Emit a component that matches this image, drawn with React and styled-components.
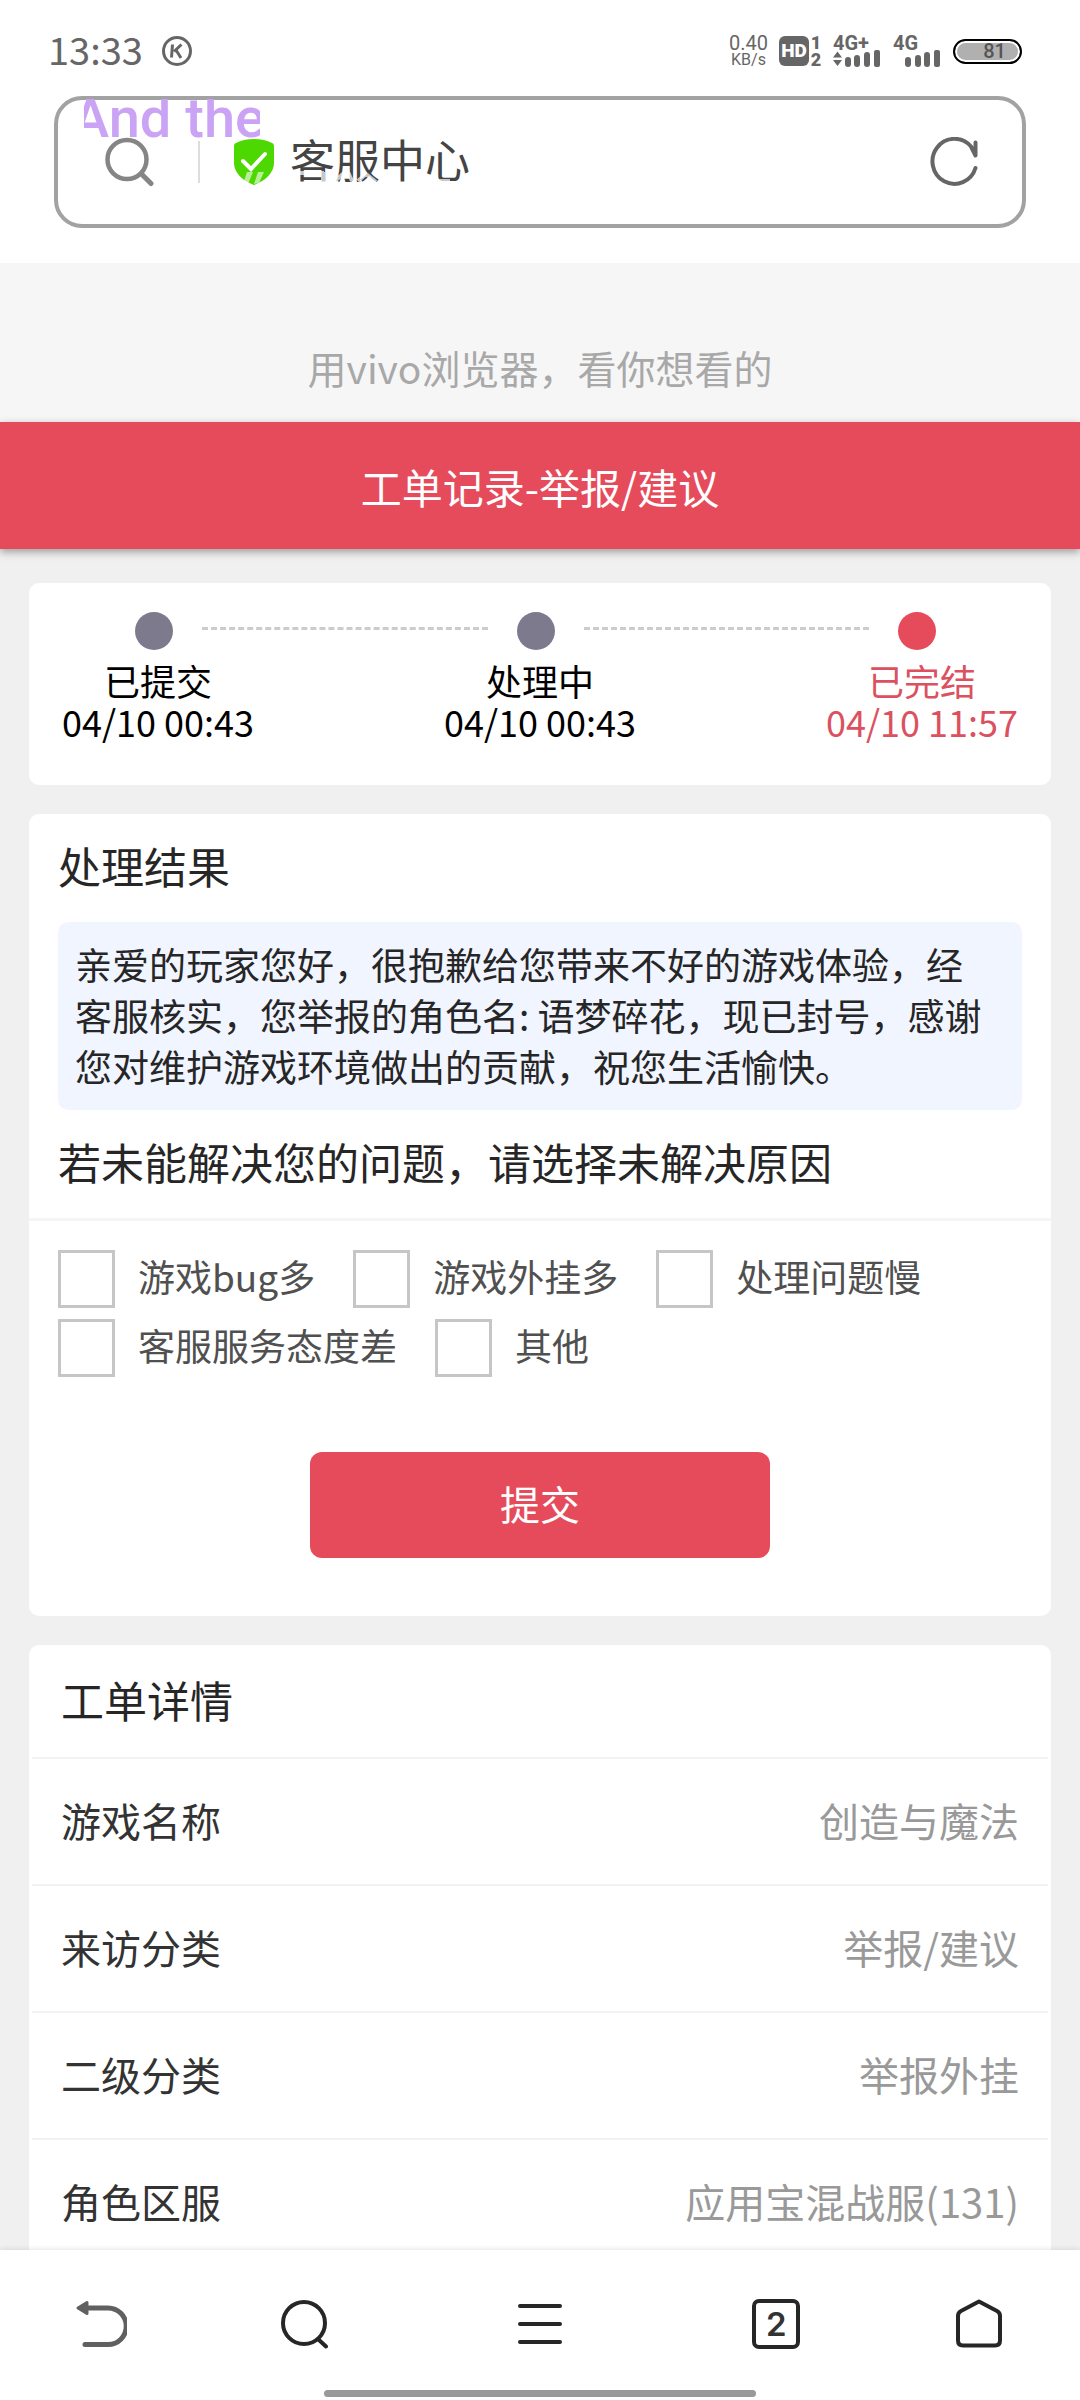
import React, { useState } from 'react';
import styled, { createGlobalStyle } from 'styled-components';

const steps = [
  { name: '已提交', time: '04/10 00:43' },
  { name: '处理中', time: '04/10 00:43' },
  { name: '已完结', time: '04/10 11:57', active: true },
];

const reasons = [
  '游戏bug多',
  '游戏外挂多',
  '处理问题慢',
  '客服服务态度差',
  '其他',
];

const details = [
  { label: '游戏名称', value: '创造与魔法' },
  { label: '来访分类', value: '举报/建议' },
  { label: '二级分类', value: '举报外挂' },
  { label: '角色区服', value: '应用宝混战服(131)' },
];

function StatusBar() {
  return (
    <StStatus>
      <StClock>13:33</StClock>
      <svg width="30" height="30" viewBox="0 0 30 30" fill="none" stroke="#666">
        <circle cx="15" cy="15" r="13.5" strokeWidth="3" />
        <path d="M10.5 8.5 9.5 21.5M19.5 8.5 12 15.5M14 14l5 8" strokeWidth="3" />
      </svg>
      <StSpeed>
        <StSpeedNum>0.40</StSpeedNum>
        <StSpeedUnit>KB/s</StSpeedUnit>
      </StSpeed>
      <StHd>HD</StHd>
      <StSims>
        <span>1</span>
        <span>2</span>
      </StSims>
      <StSignal>
        <StNet>4G+</StNet>
        <svg width="48" height="17" viewBox="0 0 48 17" fill="#666">
          <path d="M0 7.500l4.500-6 4.500 6zM0 10l4.500 6 4.500-6z" />
          <rect x="12" y="7" width="6" height="10" rx="3" />
          <rect x="21" y="5" width="6" height="12" rx="3" />
          <rect x="31" y="2" width="6" height="15" rx="3" />
          <rect x="41" y="0" width="6" height="17" rx="2" />
        </svg>
      </StSignal>
      <StSignal>
        <StNet>4G</StNet>
        <svg width="48" height="17" viewBox="0 0 48 17" fill="#666">
          <rect x="12" y="7" width="6" height="10" rx="3" />
          <rect x="22" y="5" width="6" height="12" rx="3" />
          <rect x="31" y="2" width="6" height="15" rx="3" />
          <rect x="41" y="0" width="6" height="17" rx="2" />
        </svg>
      </StSignal>
      <StBattery>81</StBattery>
    </StStatus>
  );
}

function AddressBar() {
  return (
    <StAddress>
      <StLyric>And the</StLyric>
      <StIconButton aria-label="搜索">
        <svg width="50" height="50" viewBox="0 0 50 50" fill="none" stroke="#858585">
          <circle cx="23" cy="22.500" r="19.500" strokeWidth="4.500" />
          <path d="M37.500 37 47 46.500" strokeWidth="5" strokeLinecap="round" />
        </svg>
      </StIconButton>
      <StDivider />
      <svg width="40" height="46" viewBox="0 0 40 46" fill="none">
        <path
          d="M20 0c7 0 13 1.500 18 4 1.500.7 2 1.800 2 3.500V24c0 10-9 18-20 22C9 42 0 34 0 24V7.500C0 5.800.5 4.700 2 4 7 1.500 13 0 20 0z"
          fill="#4cd800"
        />
        <path d="m9 22 8 8 14-15" stroke="#fff" strokeWidth="4" strokeLinecap="round" />
        <path d="M13 33h6l-5 12-4-3zM24 33h6l-5 11-5 1z" fill="#fff" opacity=".6" />
      </svg>
      <StSite>
        客服中心
        <StGhost viewBox="0 0 160 12" fill="none" stroke="#fff" strokeWidth="4">
          <path
            d="M8 1v11M8 2h26M33 1v11M46 9l8-7M58 1l4 9M68 10 76 3l10 8M108 1v10M142 10h18"
            opacity=".7"
          />
        </StGhost>
      </StSite>
      <StIconButton aria-label="刷新">
        <svg width="50" height="50" viewBox="0 0 50 50" fill="none" stroke="#666" strokeWidth="4" strokeLinecap="round" strokeLinejoin="round">
          <path d="M45.500 31A22 22.500 0 1 1 41 9.500l4.500 9V5.500" />
        </svg>
      </StIconButton>
    </StAddress>
  );
}

function Progress() {
  return (
    <StCard>
      <StTrack>
        {steps.map((step, i) => (
          <React.Fragment key={step.name}>
            {i > 0 && <StDash />}
            <StDot $active={step.active} />
          </React.Fragment>
        ))}
      </StTrack>
      <StSteps>
        {steps.map(step => (
          <StStep key={step.name} $active={step.active}>
            <span>{step.name}</span>
            <span>{step.time}</span>
          </StStep>
        ))}
      </StSteps>
    </StCard>
  );
}

function Result() {
  const [checked, setChecked] = useState([]);

  const toggle = reason => {
    setChecked(
      checked.includes(reason)
        ? checked.filter(item => item !== reason)
        : [...checked, reason]
    );
  };

  return (
    <StCard as="form" onSubmit={e => e.preventDefault()}>
      <StTitle>处理结果</StTitle>
      <StNotice>
        亲爱的玩家您好，很抱歉给您带来不好的游戏体验，经客服核实，您举报的角色名:
        语梦碎花，现已封号，感谢您对维护游戏环境做出的贡献，祝您生活愉快。
      </StNotice>
      <StQuestion>若未能解决您的问题，请选择未解决原因</StQuestion>
      <StReasons>
        {reasons.map(reason => (
          <StReason key={reason}>
            <StCheckbox
              type="checkbox"
              checked={checked.includes(reason)}
              onChange={() => toggle(reason)}
            />
            {reason}
          </StReason>
        ))}
      </StReasons>
      <StSubmit type="submit">提交</StSubmit>
    </StCard>
  );
}

function Details() {
  return (
    <StDetailCard>
      <StDetailTitle>工单详情</StDetailTitle>
      <StList>
        {details.map(item => (
          <StRow key={item.label}>
            <dt>{item.label}</dt>
            <dd>{item.value}</dd>
          </StRow>
        ))}
      </StList>
    </StDetailCard>
  );
}

function BottomNav() {
  return (
    <StNav>
      <StNavRow>
        <StIconButton aria-label="返回">
          <svg width="52" height="50" viewBox="0 0 52 50" fill="none" stroke="#606060" strokeLinecap="round">
            <path d="M14 9h19a18 18 0 0 1 0 36.500H10" strokeWidth="5" />
            <path d="M3 9 12 3.500v11z" fill="#606060" strokeWidth="3" strokeLinejoin="round" />
          </svg>
        </StIconButton>
        <StIconButton aria-label="搜索">
          <svg width="50" height="50" viewBox="0 0 50 50" fill="none" stroke="#262626" strokeWidth="4" strokeLinecap="round">
            <circle cx="25" cy="24" r="21" />
            <path d="m40 41 7 6.500" />
          </svg>
        </StIconButton>
        <StIconButton aria-label="菜单">
          <svg width="46" height="50" viewBox="0 0 46 50" stroke="#262626" strokeWidth="4" strokeLinecap="round">
            <path d="M3 7h40M3 25h40M3 43h40" />
          </svg>
        </StIconButton>
        <StIconButton aria-label="标签页">
          <StTabs>2</StTabs>
        </StIconButton>
        <StIconButton aria-label="主页">
          <svg width="50" height="50" viewBox="0 0 50 50" fill="none" stroke="#262626" strokeWidth="4" strokeLinejoin="round">
            <path d="M25 2.500 43 12q3 1.500 3 5v24.500q0 5-5 5H9q-5 0-5-5V17q0-3.500 3-5z" />
          </svg>
        </StIconButton>
      </StNavRow>
      <StHandle />
    </StNav>
  );
}

export default function App() {
  return (
    <StPage>
      <GlobalStyle />
      <StTop>
        <StatusBar />
        <AddressBar />
      </StTop>
      <StHint>用vivo浏览器，看你想看的</StHint>
      <StHeader>工单记录-举报/建议</StHeader>
      <StMain>
        <Progress />
        <Result />
        <Details />
      </StMain>
      <BottomNav />
    </StPage>
  );
}

const GlobalStyle = createGlobalStyle`
  * {
    box-sizing: border-box;
  }

  body {
    margin: 0;
    background: #f0f0f0;
    font-family: 'Noto Sans CJK SC', sans-serif;
  }

  button, input {
    font-family: inherit;
  }

  svg {
    display: block;
    flex-shrink: 0;
  }
`;

const StPage = styled.div`
  display: flex;
  flex-direction: column;
  height: 100vh;
  overflow: hidden;
`;

const StTop = styled.header`
  padding: 32px 54px 35px;
  background: #fff;
`;

const StStatus = styled.div`
  display: flex;
  align-items: center;
  height: 38px;
  margin: 0 4px 26px -6px;
  color: #666;
`;

const StClock = styled.div`
  width: 114px;
  padding-bottom: 4px;
  font-size: 38px;
  line-height: 38px;
`;

const StSpeed = styled.div`
  display: flex;
  flex-direction: column;
  align-items: center;
  margin-left: auto;
  margin-right: 11px;
  font-family: Roboto, sans-serif;
`;

const StSpeedNum = styled.span`
  font-size: 20px;
  line-height: 18px;
`;

const StSpeedUnit = styled.span`
  font-size: 16px;
  line-height: 16px;
`;

const StHd = styled.div`
  width: 30px;
  height: 30px;
  border-radius: 6px;
  background: #666;
  color: #fff;
  font: 900 19px/30px Roboto, sans-serif;
  text-align: center;
`;

const StSims = styled.div`
  display: flex;
  flex-direction: column;
  align-items: center;
  width: 14px;
  margin-right: 10px;
  font: 900 18px/17px Roboto, sans-serif;
`;

const StSignal = styled.div`
  display: flex;
  flex-direction: column;
  width: 48px;
  height: 31px;
  margin-right: 12px;
`;

const StNet = styled.span`
  font: 700 20px/14px Roboto, sans-serif;
`;

const StBattery = styled.div`
  width: 69px;
  height: 25px;
  padding-left: 14px;
  border: 2px solid #000;
  border-radius: 13px;
  background: #b0b0b0;
  box-shadow: inset 0 0 0 2px #fff;
  color: #555;
  font: 500 20px/21px Roboto, sans-serif;
  text-align: center;
`;

const StAddress = styled.div`
  position: relative;
  display: flex;
  align-items: center;
  height: 132px;
  padding: 0 42px 0 46px;
  border: 4px solid #a2a2a2;
  border-radius: 28px;
`;

/* floating desktop lyric, cut off by its own window */
const StLyric = styled.div`
  position: absolute;
  top: -1px;
  left: 26px;
  display: flex;
  align-items: flex-end;
  width: 176px;
  height: 42px;
  overflow: hidden;
  color: #cba3f5;
  font: 500 56px/46px Roboto, sans-serif;
  text-indent: -12px;
  white-space: nowrap;
`;

const StIconButton = styled.button`
  display: flex;
  align-items: center;
  justify-content: center;
  padding: 0;
  border: 0;
  background: transparent;
  cursor: pointer;
`;

const StDivider = styled.div`
  width: 2px;
  height: 42px;
  margin: 0 34px 0 44px;
  background: #ddd;
`;

const StSite = styled.div`
  position: relative;
  flex: 1;
  margin-left: 16px;
  padding-bottom: 6px;
  color: #444;
  font-size: 45px;
  line-height: 60px;
`;

const StGhost = styled.svg`
  position: absolute;
  left: 0;
  bottom: 12px;
  width: 160px;
  height: 12px;
`;

const StHint = styled.div`
  padding: 76px 0 27px;
  background: #f6f6f7;
  color: #a8a8a8;
  font-size: 39px;
  line-height: 56px;
  text-align: center;
`;

const StHeader = styled.h1`
  flex-shrink: 0;
  margin: 0;
  padding: 36px 0 35px;
  background: #e64b5b;
  box-shadow: 0 3px 8px rgba(0, 0, 0, 0.35);
  color: #fff;
  font-size: 41px;
  font-weight: 400;
  line-height: 56px;
  text-align: center;
`;

const StMain = styled.main`
  display: flex;
  flex: 1;
  flex-direction: column;
  gap: 29px;
  min-height: 0;
  padding: 34px 29px 0;
  overflow: hidden;
`;

const StCard = styled.section`
  flex-shrink: 0;
  border-radius: 10px;
  background: #fff;
`;

const StTrack = styled.div`
  display: flex;
  align-items: center;
  gap: 29px;
  padding: 29px 115px 0 106px;
`;

const StDot = styled.div`
  width: 38px;
  height: 38px;
  border-radius: 50%;
  background: ${props => (props.$active ? '#e64b5b' : '#7c7a8c')};
`;

const StDash = styled.div`
  flex: 1;
  height: 9px;
  border-top: 3px dashed #ccc;
`;

const StSteps = styled.div`
  display: flex;
  justify-content: space-between;
  padding: 10px 29px 43px;
`;

const StStep = styled.div`
  display: flex;
  flex-direction: column;
  align-items: center;
  width: 200px;
  color: ${props => (props.$active ? '#dc5160' : '#000')};
  font-size: 36px;
  line-height: 41px;
  white-space: nowrap;
`;

const StTitle = styled.h2`
  margin: 0;
  padding: 21px 29px 27px;
  color: #262626;
  font-size: 43px;
  font-weight: 400;
  line-height: 60px;
`;

const StNotice = styled.p`
  margin: 0 29px;
  padding: 17px 28px 18px 17px;
  border-radius: 10px;
  background: #f1f5ff;
  color: #262626;
  font-size: 37px;
  line-height: 51px;
`;

const StQuestion = styled(StTitle)`
  border-bottom: 3px solid #f5f5f5;
`;

const StReasons = styled.div`
  display: flex;
  flex-wrap: wrap;
  gap: 11px 38px;
  padding: 29px 29px 0;
`;

const StReason = styled.label`
  display: flex;
  align-items: flex-start;
  gap: 23px;
  color: #505050;
  font-size: 37px;
  line-height: 52px;
`;

const StCheckbox = styled.input`
  width: 57px;
  height: 58px;
  margin: 0;
  border: 3px solid #c6c6c6;
  background: #fff;
  appearance: none;

  &:checked {
    background: #e64b5b;
  }
`;

const StSubmit = styled.button`
  display: block;
  width: 45%;
  margin: 75px auto 58px;
  padding: 23px 0 27px;
  border: 0;
  border-radius: 12px;
  background: #e64b5b;
  color: #fff;
  font-size: 40px;
  line-height: 56px;
`;

const StDetailCard = styled(StCard)`
  padding: 0 3px;
`;

const StDetailTitle = styled.h2`
  margin: 0;
  padding: 24px 29px 28px;
  color: #262626;
  font-size: 43px;
  font-weight: 400;
  line-height: 60px;
`;

const StList = styled.dl`
  margin: 0;
`;

const StRow = styled.div`
  display: flex;
  justify-content: space-between;
  padding: 33px 29px 36px;
  border-top: 2px solid #f2f2f2;
  color: #333;
  font-size: 40px;
  line-height: 56px;

  & > dd {
    margin: 0;
    color: #999;
  }
`;

const StNav = styled.nav`
  z-index: 1;
  flex-shrink: 0;
  padding-bottom: 3px;
  background: #fff;
  box-shadow: 0 -1px 5px rgba(0, 0, 0, 0.1);
`;

const StNavRow = styled.div`
  display: grid;
  grid-template-columns: 3fr 3fr 4fr 3fr 3fr;
  height: 140px;
  padding-top: 8px;
`;

const StTabs = styled.span`
  width: 48px;
  height: 50px;
  border: 4px solid #262626;
  border-radius: 7px;
  color: #333;
  font: 600 33px/43px Inter, sans-serif;
  text-align: center;
`;

const StHandle = styled.div`
  width: 40%;
  height: 7px;
  margin: 0 auto;
  border-radius: 4px;
  background: #999;
`;
